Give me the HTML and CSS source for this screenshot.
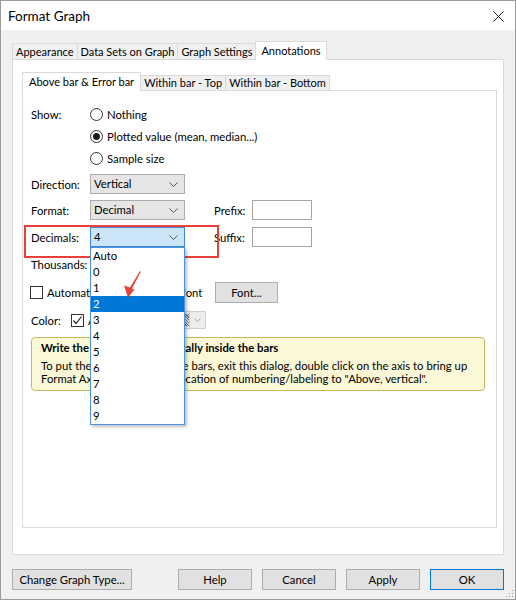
FILE: index.html
```html
<!DOCTYPE html>
<html lang="en">
<head>
    <meta charset="UTF-8">
    <meta name="viewport" content="width=device-width, initial-scale=1.0">
    <title>Format Graph</title>
    <link rel="stylesheet" href="styles.css">
</head>
<body>
    <div class="window">
        <header class="titlebar">
            <span>Format Graph</span>
            <svg class="close" width="11" height="11" viewBox="0 0 11 11">
                <path d="M0.5 0.5 L10.5 10.5 M10.5 0.5 L0.5 10.5" stroke="#222" stroke-width="1" fill="none"/>
            </svg>
        </header>

        <div class="dialog">
            <div class="tabs">
                <div class="tab">Appearance</div>
                <div class="tab">Data Sets on Graph</div>
                <div class="tab">Graph Settings</div>
                <div class="tab active">Annotations</div>
            </div>

            <div class="tab_panel">
                <div class="tabs sub_tabs">
                    <div class="tab active">Above bar &amp; Error bar</div>
                    <div class="tab">Within bar - Top</div>
                    <div class="tab">Within bar - Bottom</div>
                </div>

                <div class="sub_panel">
                    <div class="row row_first">
                        <span class="label">Show:</span>
                        <span class="radio"></span>Nothing
                    </div>
                    <div class="row row_radio">
                        <span class="label"></span>
                        <span class="radio checked"></span>Plotted value (mean, median...)
                    </div>
                    <div class="row row_radio">
                        <span class="label"></span>
                        <span class="radio"></span>Sample size
                    </div>

                    <div class="row row_combo">
                        <span class="label">Direction:</span>
                        <div class="combo">Vertical<svg class="chev" width="9" height="5" viewBox="0 0 9 5"><path d="M0.5 0.5 L4.5 4.5 L8.5 0.5" fill="none" stroke="#555"/></svg></div>
                    </div>
                    <div class="row row_combo">
                        <span class="label">Format:</span>
                        <div class="combo">Decimal<svg class="chev" width="9" height="5" viewBox="0 0 9 5"><path d="M0.5 0.5 L4.5 4.5 L8.5 0.5" fill="none" stroke="#555"/></svg></div>
                        <span class="side_label">Prefix:</span>
                        <div class="textbox"></div>
                    </div>
                    <div class="row row_decimals">
                        <span class="label">Decimals:</span>
                        <div class="combo focused">4<svg class="chev" width="9" height="5" viewBox="0 0 9 5"><path d="M0.5 0.5 L4.5 4.5 L8.5 0.5" fill="none" stroke="#555"/></svg>
                            <ul class="droplist">
                                <li>Auto</li>
                                <li>0</li>
                                <li>1</li>
                                <li class="selected">2</li>
                                <li>3</li>
                                <li>4</li>
                                <li>5</li>
                                <li>6</li>
                                <li>7</li>
                                <li>8</li>
                                <li>9</li>
                            </ul>
                        </div>
                        <span class="side_label">Suffix:</span>
                        <div class="textbox"></div>
                    </div>

                    <div class="row row_thousands">
                        <span class="label">Thousands:</span>
                    </div>

                    <div class="row row_auto">
                        <span class="checkbox"></span>
                        <span class="auto_text">Automatically choose their font</span>
                        <button class="btn font_btn">Font...</button>
                    </div>

                    <div class="row row_color">
                        <span class="color_label">Color:</span>
                        <span class="checkbox checked"><svg width="11" height="11" viewBox="0 0 11 11"><path d="M1.5 5.5 L4 8.5 L9.5 1.5" fill="none" stroke="#222" stroke-width="1.2"/></svg></span>
                        <span class="color_text">Automatic</span>
                        <div class="color_pick">
                            <span class="swatch"></span>
                            <span class="pick_arrow"><svg width="7" height="4" viewBox="0 0 7 4"><path d="M0.5 0.5 L3.5 3.5 L6.5 0.5" fill="none" stroke="#aaa"/></svg></span>
                        </div>
                    </div>

                    <div class="tip">
                        <b>Write the bar numbers vertically inside the bars</b>
                        <p>To put the numbers inside the bars, exit this dialog, double click on the axis to bring up<br>Format Axis dialog, and set location of numbering/labeling to "Above, vertical".</p>
                    </div>
                </div>
            </div>

            <div class="buttons">
                <button class="btn wide">Change Graph Type...</button>
                <div class="btn_group">
                    <button class="btn">Help</button>
                    <button class="btn">Cancel</button>
                    <button class="btn">Apply</button>
                    <button class="btn default">OK</button>
                </div>
            </div>
        </div>

        <!-- callout around the decimals field -->
        <div class="callout"></div>
        <svg class="pointer" width="24" height="32" viewBox="0 0 24 32">
            <polygon points="8,29.5 14.5,21.5 12,20.6 21,3.5 19.8,3.2 10,19.6 4,17.5" fill="#e8403b"/>
        </svg>

        <svg class="grip" width="8" height="8" viewBox="0 0 8 8">
            <rect x="6" y="0" width="1" height="1" fill="#999"/>
            <rect x="3" y="3" width="1" height="1" fill="#999"/>
            <rect x="6" y="3" width="1" height="1" fill="#999"/>
            <rect x="0" y="6" width="1" height="1" fill="#999"/>
            <rect x="3" y="6" width="1" height="1" fill="#999"/>
            <rect x="6" y="6" width="1" height="1" fill="#999"/>
        </svg>
    </div>
</body>
</html>
```

FILE: styles.css
```css
* {
    padding: 0;
    margin: 0;
    box-sizing: border-box;
}
body {
    width: 516px;
    height: 600px;
    overflow: hidden;
    font-family: Lato, "Liberation Sans", sans-serif;
    font-size: 11.3px;
    color: #000;
    background: #f0f0f0;
}
.window {
    position: relative;
    width: 516px;
    height: 600px;
    border: 1px solid #9a9a9a;
    background: #f0f0f0;
    display: flex;
    flex-direction: column;
}
.titlebar {
    height: 29px;
    background: #fff;
    display: flex;
    align-items: center;
    justify-content: space-between;
    padding: 0 11px 0 7px;
    font-size: 13.5px;
}
.close {
    margin-top: 1px;
}
.dialog {
    flex: 1;
    display: flex;
    flex-direction: column;
    padding: 11px 11px 0 11px;
}

/* tab strips */
.tabs {
    display: flex;
    align-items: flex-end;
    height: 18px;
    position: relative;
    z-index: 1;
    font-size: 11px;
}
.tab {
    height: 16px;
    line-height: 15px;
    padding: 0 3px;
    background: #f0f0f0;
    border: 1px solid #d9d9d9;
    border-bottom: none;
    margin-right: -1px;
    white-space: nowrap;
}
.tab.active {
    height: 19px;
    line-height: 17px;
    background: #fff;
    margin-bottom: -1px;
    padding: 0 5px;
}
.tab_panel {
    height: 496px;
    background: #fff;
    border: 1px solid #d9d9d9;
    padding: 12px 6px 0 9px;
}
.sub_tabs .tab {
    height: 15px;
    line-height: 14px;
    padding: 0 3px;
}
.sub_tabs .tab.active {
    height: 19px;
    line-height: 18px;
    padding: 0 6px;
}
.sub_panel {
    height: 438px;
    border: 1px solid #dcdcdc;
    padding: 13px 0 0 8px;
    position: relative;
}

/* form rows */
.row {
    display: flex;
    align-items: center;
    height: 20px;
}
.row_radio { margin-top: 2px; }
.row_combo { margin-top: 6px; }
.row_decimals { margin-top: 7px; }
.row_thousands { margin-top: 7px; }
.row_auto { margin-top: 8px; }
.row_color { margin-top: 8px; }
.label {
    width: 59px;
    flex-shrink: 0;
}
.radio {
    width: 13px;
    height: 13px;
    border: 1px solid #333;
    border-radius: 50%;
    background: #fff;
    margin-right: 4px;
    display: flex;
    align-items: center;
    justify-content: center;
}
.radio.checked::before {
    content: '';
    width: 7px;
    height: 7px;
    border-radius: 50%;
    background: #1a1a1a;
}
.combo {
    position: relative;
    width: 95px;
    height: 20px;
    line-height: 18px;
    padding-left: 3px;
    background: #e5e5e5;
    border: 1px solid #acacac;
}
.combo.focused {
    background: #cce4f7;
    border-color: #3c8ad8;
}
.chev {
    position: absolute;
    right: 6px;
    top: 7px;
}
.side_label {
    margin-left: 29px;
    width: 38px;
}
.textbox {
    width: 60px;
    height: 20px;
    background: #fff;
    border: 1px solid #a5a5a5;
}

/* open list of the decimals field */
.droplist {
    position: absolute;
    top: 19px;
    left: -1px;
    width: 95px;
    list-style: none;
    background: #fff;
    border: 1px solid #4b94dc;
    box-shadow: 2px 2px 3px rgba(0, 0, 0, 0.25);
    z-index: 5;
}
.droplist li {
    height: 16px;
    line-height: 15px;
    padding-left: 2px;
}
.droplist li.selected {
    background: #0078d7;
    color: #fff;
}

.checkbox {
    width: 13px;
    height: 13px;
    border: 1px solid #333;
    background: #fff;
    margin-right: 4px;
    flex-shrink: 0;
    display: flex;
    align-items: center;
    justify-content: center;
}
.row_auto .checkbox {
    margin-left: -1px;
}
.auto_text {
    width: 168px;
    white-space: nowrap;
    overflow: hidden;
}
.btn {
    font: inherit;
    color: #000;
    height: 21px;
    background: #e1e1e1;
    border: 1px solid #adadad;
}
.font_btn {
    width: 63px;
}
.color_label {
    width: 40px;
}
.color_text {
    width: 72px;
}
.color_pick {
    display: flex;
    width: 46px;
    height: 18px;
    border: 1px solid #cfcfcf;
    background: #ededed;
}
.swatch {
    flex: 1;
    margin: 2px 0 2px 2px;
    background: repeating-linear-gradient(45deg, #777 0 1px, #ddd 1px 2px);
}
.pick_arrow {
    width: 16px;
    display: flex;
    align-items: center;
    justify-content: center;
    border-left: 1px solid #cfcfcf;
}

/* hint box */
.tip {
    margin-top: 7px;
    width: 454px;
    height: 54px;
    padding: 3px 9px;
    background: #fbf8d8;
    border: 1px solid #c9b65c;
    border-radius: 4px;
    line-height: 13px;
    white-space: nowrap;
}
.tip b {
    display: block;
    margin-bottom: 5px;
}

/* bottom buttons */
.buttons {
    display: flex;
    justify-content: space-between;
    margin-top: 14px;
}
.btn.wide {
    width: 120px;
}
.btn_group {
    display: flex;
    gap: 10px;
}
.btn_group .btn {
    width: 74px;
}
.btn.default {
    border-color: #0078d7;
}

.callout {
    position: absolute;
    left: 23px;
    top: 224px;
    width: 195px;
    height: 33px;
    border: 2px solid #e8403b;
    z-index: 2;
}
.pointer {
    position: absolute;
    left: 119px;
    top: 267px;
    z-index: 6;
}
.grip {
    position: absolute;
    right: 1px;
    bottom: 1px;
}
```
